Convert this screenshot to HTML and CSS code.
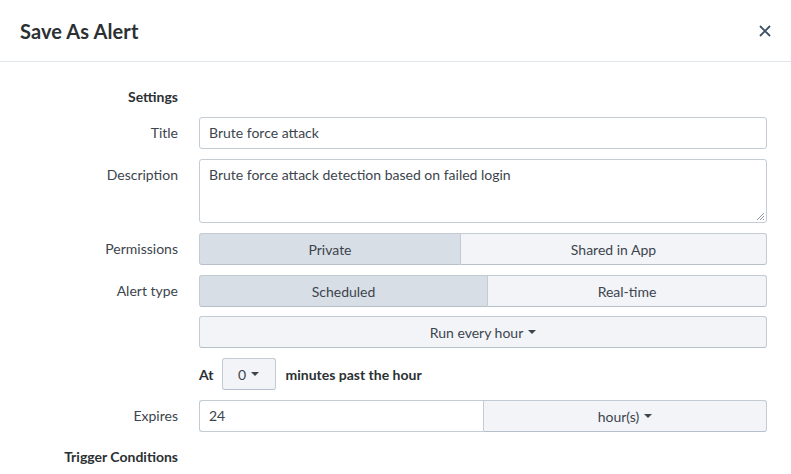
FILE: index.html
```html
<!DOCTYPE html>
<html>
<head>
<meta charset="utf-8">
<link rel="stylesheet" href="styles.css">
</head>
<body>
<div class="modal">
  <header class="modal-header">
    <h1 class="modal-title">Save As Alert</h1>
    <button class="close" aria-label="Close">
      <svg width="12" height="12" viewBox="0 0 12 12"><path d="M1 1L11 11M11 1L1 11" stroke="#3c5166" stroke-width="1.8" fill="none"/></svg>
    </button>
  </header>
  <div class="modal-body">
    <div class="form">
      <div class="section-label">Settings</div>
      <div></div>

      <label class="label">Title</label>
      <div class="input">Brute force attack</div>

      <label class="label">Description</label>
      <div class="textarea">Brute force attack detection based on failed login
        <svg class="grip" width="9" height="9" viewBox="0 0 9 9"><path d="M8 1L1 8M8 4L4 8M8 7L7 8" stroke="#8a96a3" stroke-width="1"/></svg>
      </div>

      <label class="label">Permissions</label>
      <div class="segmented">
        <div class="seg seg-active seg-private">Private</div>
        <div class="seg seg-rest">Shared in App</div>
      </div>

      <label class="label">Alert type</label>
      <div class="segmented">
        <div class="seg seg-active seg-scheduled">Scheduled</div>
        <div class="seg seg-rest">Real-time</div>
      </div>

      <div></div>
      <div class="button wide">Run every hour <span class="caret"></span></div>

      <div></div>
      <div class="at-row">
        <span class="bold">At</span>
        <div class="button small">0 <span class="caret"></span></div>
        <span class="bold">minutes past the hour</span>
      </div>

      <label class="label">Expires</label>
      <div class="combo">
        <div class="combo-input">24</div>
        <div class="combo-btn">hour(s) <span class="caret"></span></div>
      </div>

      <div class="section-label trigger">Trigger Conditions</div>
      <div></div>
    </div>
  </div>
</div>
</body>
</html>
```

FILE: styles.css
```css
* { box-sizing: border-box; }
html, body { margin: 0; padding: 0; background: #fff; }
body {
  font-family: Lato, "Open Sans", "Liberation Sans", sans-serif;
  font-size: 14px;
  color: #3c444d;
  width: 791px;
  height: 474px;
  overflow: hidden;
}
.modal-header {
  height: 62px;
  border-bottom: 1px solid #e1e6eb;
  display: flex;
  align-items: center;
  justify-content: space-between;
  padding: 0 19px 0 20px;
}
.modal-title {
  margin: 0;
  font-size: 20px;
  font-weight: 700;
  color: #2b3033;
  letter-spacing: 0.1px;
}
.close {
  border: 0;
  background: none;
  padding: 0;
  width: 14px;
  height: 14px;
  display: flex;
  align-items: center;
  justify-content: center;
}
.modal-body {
  padding: 25px 24px 0 0;
}
.form {
  display: grid;
  grid-template-columns: 178px 1fr;
  column-gap: 21px;
  row-gap: 10px;
}
.section-label {
  font-weight: 700;
  color: #2b3033;
  text-align: right;
  line-height: 20px;
  height: 20px;
}
.section-label.trigger { margin-top: 5px; }
.label {
  text-align: right;
  line-height: 32px;
  color: #3c444d;
}
.input, .textarea, .combo-input {
  border: 1px solid #c3cbd4;
  border-radius: 3px;
  background: #fff;
  padding: 0 9px;
  line-height: 30px;
  height: 32px;
  color: #3c444d;
}
.textarea {
  height: 64px;
  position: relative;
  padding-top: 0;
}
.grip { position: absolute; right: 1px; bottom: 1px; }
.segmented {
  display: flex;
  height: 32px;
}
.seg {
  display: flex;
  align-items: center;
  justify-content: center;
  border: 1px solid #c3cbd4;
  border-bottom-color: #b6c0cb;
  background: #f2f4f8;
  color: #3c444d;
}
.seg-active {
  background: #d8dee5;
  border-radius: 3px 0 0 3px;
  border-right: 0;
}
.seg-rest {
  flex: 1;
  border-radius: 0 3px 3px 0;
}
.seg-private { width: 261px; }
.seg-scheduled { width: 288px; }
.button {
  display: flex;
  align-items: center;
  justify-content: center;
  border: 1px solid #c3cbd4;
  border-bottom-color: #b6c0cb;
  border-radius: 3px;
  background: #f2f4f8;
  color: #3c444d;
  height: 32px;
  gap: 5px;
}
.button.wide { margin-top: -1px; }
.caret {
  display: inline-block;
  width: 0;
  height: 0;
  border-left: 4px solid transparent;
  border-right: 4px solid transparent;
  border-top: 4px solid #3c444d;
}
.at-row {
  display: flex;
  align-items: center;
  height: 32px;
}
.bold { font-weight: 700; color: #2b3033; }
.button.small {
  width: 54px;
  margin: 0 10px 0 8px;
}
.combo {
  display: flex;
  height: 32px;
}
.combo-input {
  width: 284px;
  border-radius: 3px 0 0 3px;
  border-right: 0;
}
.combo-btn {
  flex: 1;
  display: flex;
  align-items: center;
  justify-content: center;
  gap: 5px;
  border: 1px solid #c3cbd4;
  border-bottom-color: #b6c0cb;
  border-radius: 0 3px 3px 0;
  background: #f2f4f8;
}
```
